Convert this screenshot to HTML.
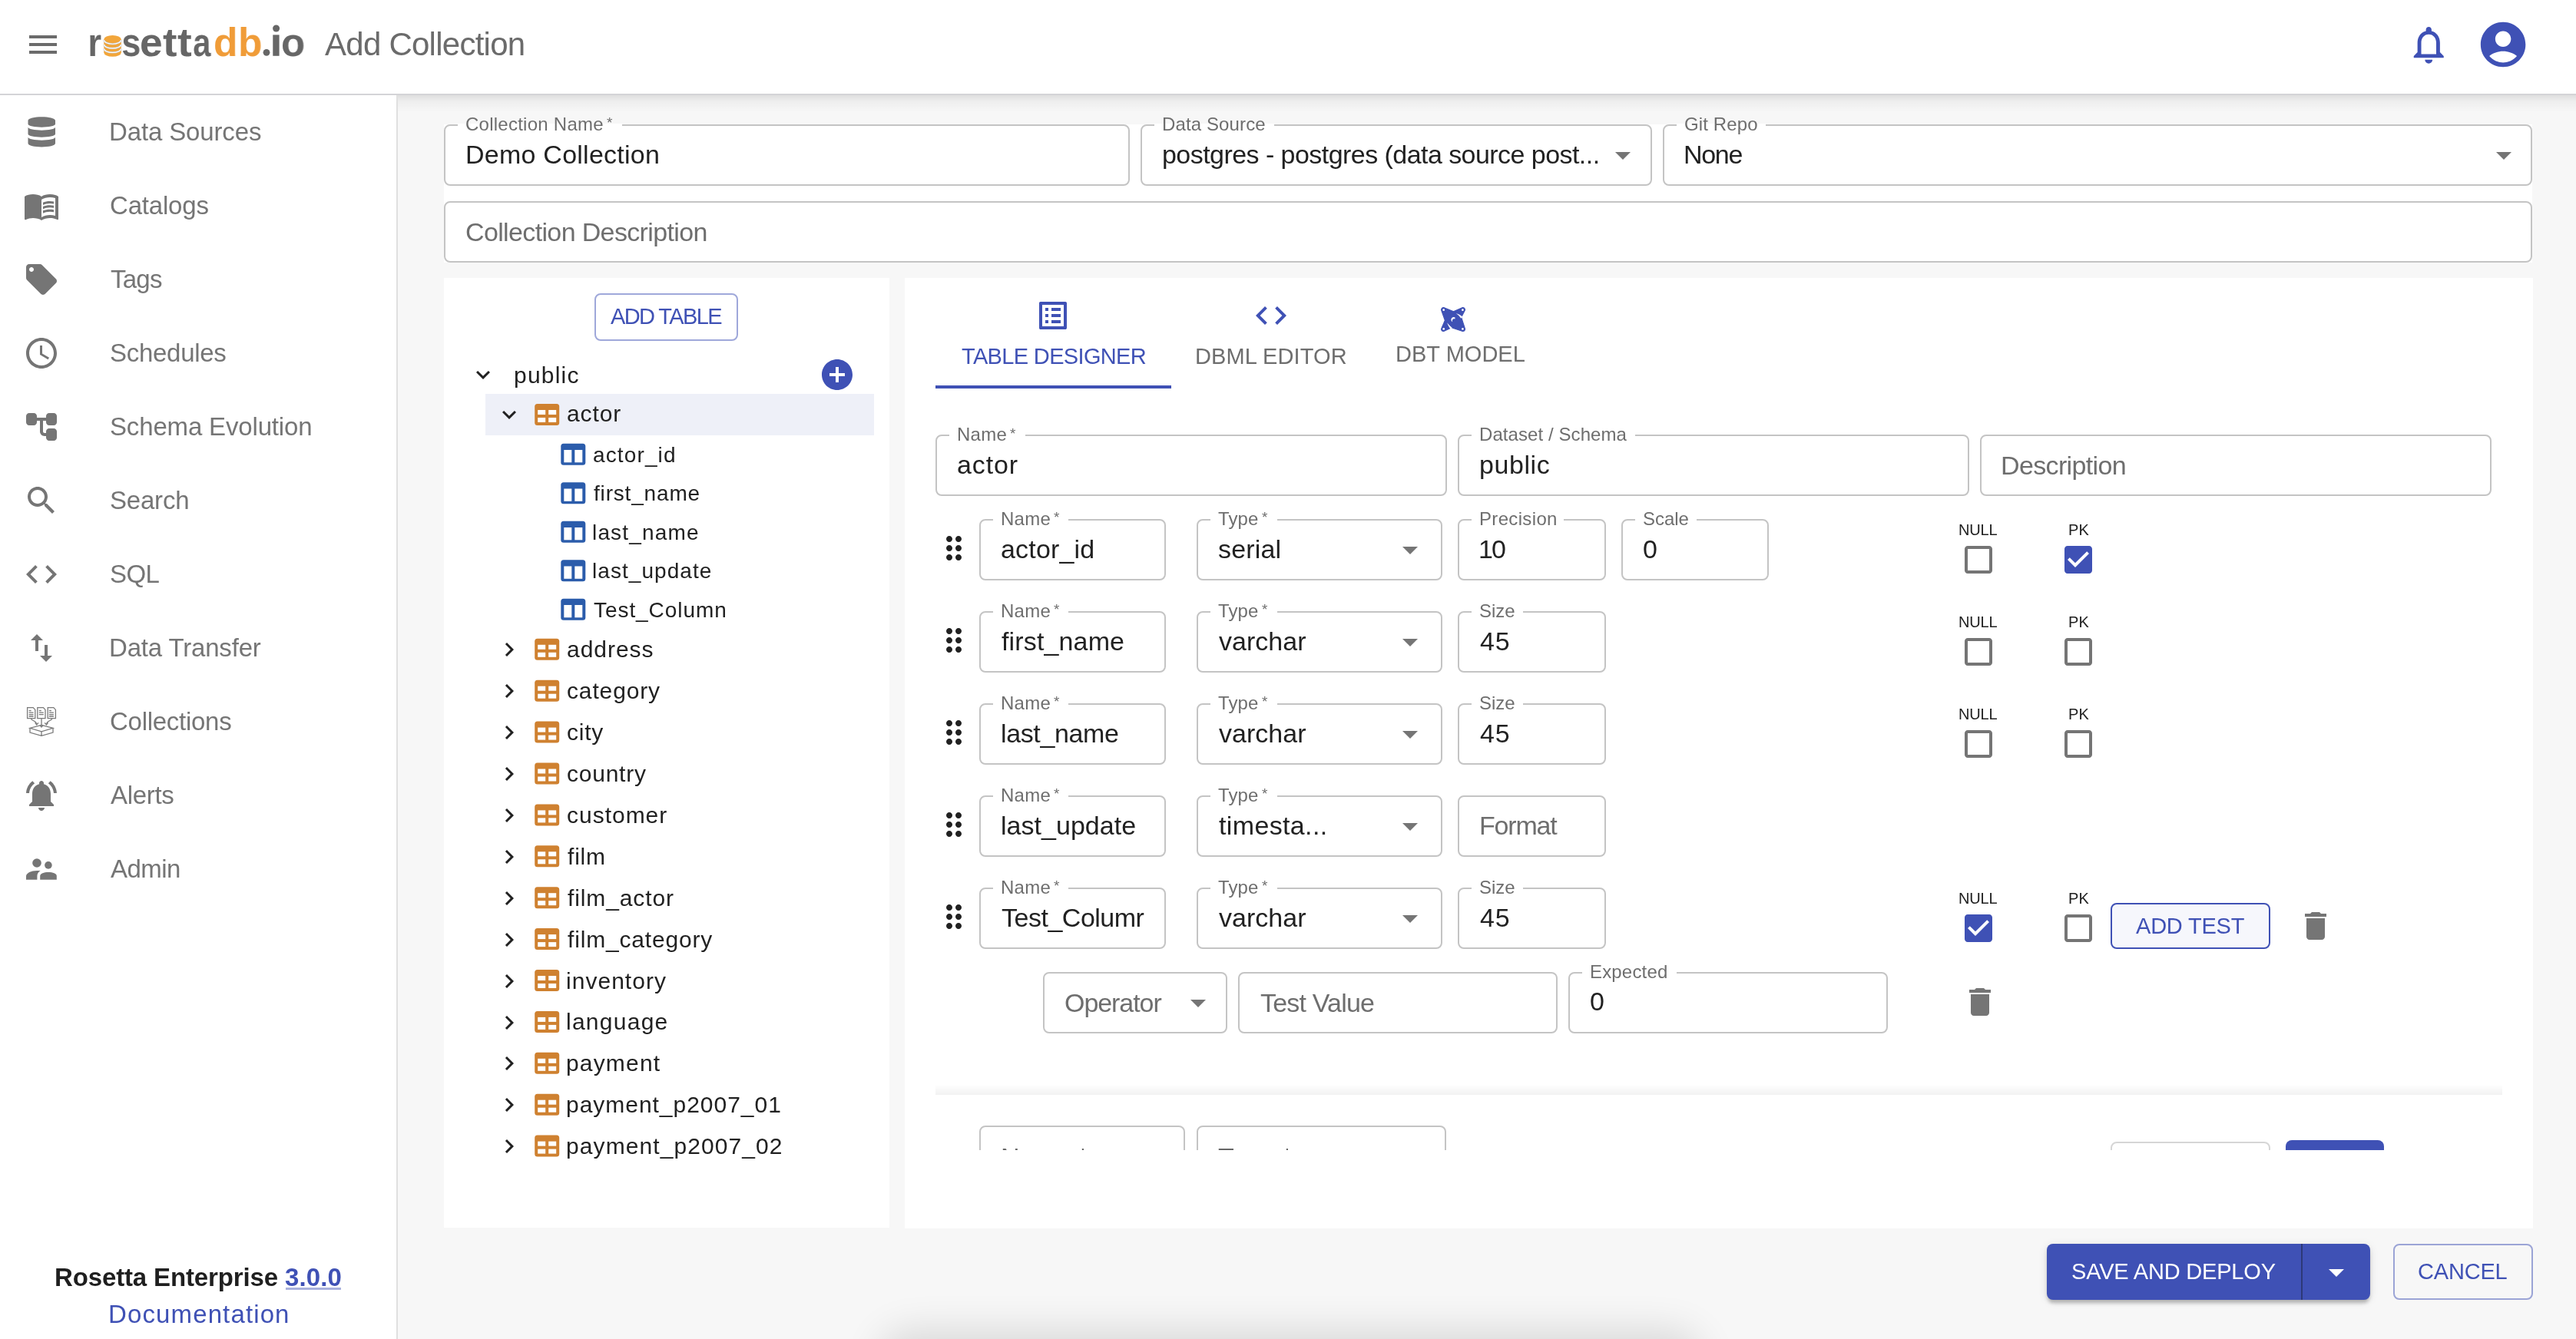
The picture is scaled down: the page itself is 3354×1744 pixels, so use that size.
<!DOCTYPE html>
<html><head><meta charset="utf-8"><style>
html,body{margin:0;padding:0;}
body{width:3354px;height:1744px;position:relative;overflow:hidden;background:#f7f7f7;font-family:"Liberation Sans",sans-serif;}
.t{position:absolute;white-space:nowrap;will-change:transform;font-family:"Liberation Sans",sans-serif;}
</style></head><body>
<div style="position:absolute;left:0.00px;top:0.00px;width:3354.00px;height:122.00px;background:#fff;"></div>
<div style="position:absolute;left:0.00px;top:122.00px;width:3354.00px;height:2.00px;background:#d4d4d7;"></div>
<div style="position:absolute;left:518.00px;top:124.00px;width:2836.00px;height:22.00px;background:linear-gradient(to bottom, rgba(0,0,0,0.10), rgba(0,0,0,0.04) 35%, rgba(0,0,0,0) 100%);"></div>
<div style="position:absolute;left:0.00px;top:124.00px;width:516.00px;height:1620.00px;background:#fff;"></div>
<div style="position:absolute;left:516.00px;top:124.00px;width:2.00px;height:1620.00px;background:#e0e0e0;"></div>
<div style="position:absolute;left:1160.00px;top:1748.00px;width:1040.00px;height:52.00px;border-radius:40px;box-shadow:0 0 50px 16px rgba(0,0,0,0.12);background:#ddd;"></div>
<svg style="position:absolute;left:32.00px;top:34.00px;width:48.00px;height:48.00px" viewBox="0 0 24 24"><path fill="#6b6b6b" d="M3 18h18v-2H3v2zm0-5h18v-2H3v2zm0-7v2h18V6H3z"/></svg>
<svg style="position:absolute;left:3133.40px;top:29.00px;width:58.50px;height:58.50px" viewBox="0 0 24 24"><path fill="#3f51b5" d="M12 22c1.1 0 2-.9 2-2h-4c0 1.1.89 2 2 2zm6-6v-5c0-3.07-1.64-5.64-4.5-6.32V4c0-.83-.67-1.5-1.5-1.5s-1.5.67-1.5 1.5v.68C7.63 5.36 6 7.92 6 11v5l-2 2v1h16v-1l-2-2zm-2 1H8v-6c0-2.48 1.51-4.5 4-4.5s4 2.02 4 4.5v6z"/></svg>
<svg style="position:absolute;left:3224.00px;top:23.00px;width:70.20px;height:70.20px" viewBox="0 0 24 24"><path fill="#3f51b5" d="M12 2C6.48 2 2 6.48 2 12s4.48 10 10 10 10-4.48 10-10S17.52 2 12 2zm0 4c1.93 0 3.5 1.57 3.5 3.5S13.93 13 12 13s-3.5-1.57-3.5-3.5S10.07 6 12 6zm0 14c-2.03 0-4.43-.82-6.14-2.88C7.55 15.8 9.68 15 12 15s4.45.8 6.14 2.12C16.43 19.18 14.03 20 12 20z"/></svg>
<div id="t1" class="t" style="left:114.00px;top:29px;font-size:52px;line-height:52px;color:#666666;letter-spacing:0.000px;font-weight:bold;transform:scaleX(0.8706);transform-origin:3.00px 0;">r</div>
<div id="t2" class="t" style="left:158.00px;top:29px;font-size:52px;line-height:52px;color:#666666;letter-spacing:0.000px;font-weight:bold;transform:scaleX(0.8640);transform-origin:2.00px 0;">s</div>
<div id="t3" class="t" style="left:182.30px;top:29px;font-size:52px;line-height:52px;color:#666666;letter-spacing:0.000px;font-weight:bold;transform:scaleX(1.0240);transform-origin:2.00px 0;">e</div>
<div id="t4" class="t" style="left:211.90px;top:29px;font-size:52px;line-height:52px;color:#666666;letter-spacing:0.000px;font-weight:bold;transform:scaleX(1.0647);transform-origin:0.00px 0;">t</div>
<div id="t5" class="t" style="left:231.40px;top:29px;font-size:52px;line-height:52px;color:#666666;letter-spacing:0.000px;font-weight:bold;transform:scaleX(1.0824);transform-origin:0.00px 0;">t</div>
<div id="t6" class="t" style="left:251.40px;top:29px;font-size:52px;line-height:52px;color:#666666;letter-spacing:0.000px;font-weight:bold;transform:scaleX(0.8034);transform-origin:1.00px 0;">a</div>
<div id="t7" class="t" style="left:278.00px;top:29px;font-size:52px;line-height:52px;color:#f09c38;letter-spacing:0.000px;font-weight:bold;transform:scaleX(0.9926);transform-origin:2.00px 0;">d</div>
<div id="t8" class="t" style="left:310.00px;top:29px;font-size:52px;line-height:52px;color:#f09c38;letter-spacing:0.000px;font-weight:bold;transform:scaleX(0.9889);transform-origin:3.00px 0;">b</div>
<div id="t9" class="t" style="left:365.60px;top:29px;font-size:52px;line-height:52px;color:#666666;letter-spacing:0.000px;font-weight:bold;transform:scaleX(0.9786);transform-origin:2.00px 0;">o</div>
<svg style="position:absolute;left:0.00px;top:0.00px;width:3354.00px;height:124.00px;overflow:visible" viewBox="0 0 3354 124"><rect x="135.3" y="51.5" width="22.5" height="16.9" fill="#f2a63b"/><ellipse cx="146.55" cy="68.4" rx="11.25" ry="5.3" fill="#f2a63b"/><ellipse cx="146.55" cy="51.5" rx="11.25" ry="5.6" fill="#f2a63b"/><path d="M135.5 52.30 a11.05 5.0 0 0 0 22.1 0" fill="none" stroke="#bdbdbd" stroke-width="2.2"/><path d="M135.5 52.30 a11.05 5.0 0 0 0 22.1 0" fill="none" stroke="#fff" stroke-width="1.1"/><path d="M135.5 57.90 a11.05 5.0 0 0 0 22.1 0" fill="none" stroke="#bdbdbd" stroke-width="2.2"/><path d="M135.5 57.90 a11.05 5.0 0 0 0 22.1 0" fill="none" stroke="#fff" stroke-width="1.1"/><path d="M135.5 63.40 a11.05 5.0 0 0 0 22.1 0" fill="none" stroke="#bdbdbd" stroke-width="2.2"/><path d="M135.5 63.40 a11.05 5.0 0 0 0 22.1 0" fill="none" stroke="#fff" stroke-width="1.1"/><circle cx="347" cy="68.3" r="4.4" fill="#666"/><circle cx="359.6" cy="37" r="4.5" fill="#666"/><rect x="355.3" y="45.4" width="8.3" height="27.4" fill="#666"/></svg>
<div id="t10" class="t" style="left:422.70px;top:37px;font-size:42px;line-height:42px;color:#6b6b6b;letter-spacing:-0.746px;">Add Collection</div>
<div id="t11" class="t" style="left:142.00px;top:155px;font-size:33px;line-height:33px;color:#757575;letter-spacing:-0.136px;">Data Sources</div>
<div id="t12" class="t" style="left:143.00px;top:251px;font-size:33px;line-height:33px;color:#757575;letter-spacing:-0.186px;">Catalogs</div>
<div id="t13" class="t" style="left:144.00px;top:347px;font-size:33px;line-height:33px;color:#757575;letter-spacing:-0.767px;">Tags</div>
<div id="t14" class="t" style="left:143.00px;top:443px;font-size:33px;line-height:33px;color:#757575;letter-spacing:-0.288px;">Schedules</div>
<div id="t15" class="t" style="left:143.00px;top:539px;font-size:33px;line-height:33px;color:#757575;letter-spacing:-0.160px;">Schema Evolution</div>
<div id="t16" class="t" style="left:143.00px;top:635px;font-size:33px;line-height:33px;color:#757575;letter-spacing:-0.200px;">Search</div>
<div id="t17" class="t" style="left:143.00px;top:731px;font-size:33px;line-height:33px;color:#757575;letter-spacing:-0.600px;">SQL</div>
<div id="t18" class="t" style="left:142.00px;top:827px;font-size:33px;line-height:33px;color:#757575;letter-spacing:-0.175px;">Data Transfer</div>
<div id="t19" class="t" style="left:143.00px;top:923px;font-size:33px;line-height:33px;color:#757575;letter-spacing:-0.270px;">Collections</div>
<div id="t20" class="t" style="left:144.00px;top:1019px;font-size:33px;line-height:33px;color:#757575;letter-spacing:-0.300px;">Alerts</div>
<div id="t21" class="t" style="left:144.00px;top:1115px;font-size:33px;line-height:33px;color:#757575;letter-spacing:-0.575px;">Admin</div>
<svg style="position:absolute;left:0.00px;top:0.00px;width:100.00px;height:300.00px;overflow:visible" viewBox="0 0 100 300"><path fill="#757575" d="M36.5 157C36.5 150.5 72 150.5 72 157L72 161.5C72 167 36.5 167 36.5 161.5Z M36.5 165.5C36.5 171 72 171 72 165.5L72 174.5C72 180 36.5 180 36.5 174.5Z M36.5 178.5C36.5 184 72 184 72 178.5L72 186.5C72 193 36.5 193 36.5 186.5Z"/></svg>
<svg style="position:absolute;left:30.00px;top:244.00px;width:48.00px;height:48.00px" viewBox="0 0 24 24"><path fill="#757575" d="M21 5c-1.11-.35-2.33-.5-3.5-.5-1.95 0-4.05.4-5.5 1.5-1.45-1.1-3.55-1.5-5.5-1.5S2.45 4.9 1 6v14.65c0 .25.25.5.5.5.1 0 .15-.05.25-.05C3.1 20.45 5.05 20 6.5 20c1.95 0 4.05.4 5.5 1.5 1.35-.85 3.8-1.5 5.5-1.5 1.65 0 3.35.3 4.75 1.05.1.05.15.05.25.05.25 0 .5-.25.5-.5V6c-.6-.45-1.25-.75-2-1zm0 13.5c-1.1-.35-2.3-.5-3.5-.5-1.7 0-4.15.65-5.5 1.5V8c1.35-.85 3.8-1.5 5.5-1.5 1.2 0 2.4.15 3.5.5v11.5zM17.5 10.5c.88 0 1.73.09 2.5.26V9.24c-.79-.15-1.64-.24-2.5-.24-1.7 0-3.24.29-4.5.83v1.66c1.13-.64 2.7-.99 4.5-.99zM13 12.49v1.66c1.13-.64 2.7-.99 4.5-.99.88 0 1.73.09 2.5.26V11.9c-.79-.15-1.64-.24-2.5-.24-1.7 0-3.24.3-4.5.83zm4.5 1.84c-1.7 0-3.24.29-4.5.83v1.66c1.13-.64 2.7-.99 4.5-.99.88 0 1.73.09 2.5.26v-1.52c-.79-.16-1.64-.24-2.5-.24z"/><path fill="#757575" d="M11.6 7.6v12.3c-1.35-.85-4.3-1.6-6-1.6-1.2 0-2.9.15-4 .5V6.6c1.1-.35 2.8-.6 4-.6 1.7 0 4.65.75 6 1.6z"/></svg>
<svg style="position:absolute;left:30.00px;top:340.00px;width:48.00px;height:48.00px" viewBox="0 0 24 24"><path fill="#757575" d="M21.41 11.58l-9-9C12.05 2.22 11.55 2 11 2H4c-1.1 0-2 .9-2 2v7c0 .55.22 1.05.59 1.42l9 9c.36.36.86.58 1.41.58.55 0 1.05-.22 1.41-.59l7-7c.37-.36.59-.86.59-1.41 0-.55-.23-1.06-.59-1.42zM5.5 7C4.67 7 4 6.33 4 5.5S4.67 4 5.5 4 7 4.67 7 5.5 6.33 7 5.5 7z"/></svg>
<svg style="position:absolute;left:30.00px;top:436.00px;width:48.00px;height:48.00px" viewBox="0 0 24 24"><path fill="#757575" d="M11.99 2C6.47 2 2 6.48 2 12s4.47 10 9.99 10C17.52 22 22 17.52 22 12S17.52 2 11.99 2zM12 20c-4.42 0-8-3.58-8-8s3.58-8 8-8 8 3.58 8 8-3.58 8-8 8zM12.5 7H11v6l5.25 3.15.75-1.23-4.5-2.67z"/></svg>
<svg style="position:absolute;left:30.00px;top:532.00px;width:48.00px;height:48.00px" viewBox="0 0 24 24"><path fill="#757575" d="M17 11h3c1.11 0 2-.9 2-2V5c0-1.11-.9-2-2-2h-3c-1.11 0-2 .9-2 2v1H9.01V5c0-1.11-.9-2-2-2H4c-1.1 0-2 .9-2 2v4c0 1.11.9 2 2 2h3c1.11 0 2-.9 2-2V8h2v7.01c0 1.65 1.34 2.99 2.99 2.99H15v1c0 1.11.9 2 2 2h3c1.11 0 2-.9 2-2v-4c0-1.11-.9-2-2-2h-3c-1.11 0-2 .9-2 2v1h-1.01c-.54 0-.99-.45-.99-.99V8h2v1c0 1.1.9 2 2 2z"/></svg>
<svg style="position:absolute;left:30.00px;top:628.00px;width:48.00px;height:48.00px" viewBox="0 0 24 24"><path fill="#757575" d="M15.5 14h-.79l-.28-.27C15.41 12.59 16 11.11 16 9.5 16 5.91 13.09 3 9.5 3S3 5.91 3 9.5 5.91 16 9.5 16c1.61 0 3.09-.59 4.23-1.57l.27.28v.79l5 4.99L20.49 19l-4.99-5zm-6 0C7.01 14 5 11.99 5 9.5S7.01 5 9.5 5 14 7.01 14 9.5 11.99 14 9.5 14z"/></svg>
<svg style="position:absolute;left:30.00px;top:724.00px;width:48.00px;height:48.00px" viewBox="0 0 24 24"><path fill="#757575" d="M9.4 16.6L4.8 12l4.6-4.6L8 6l-6 6 6 6 1.4-1.4zm5.2 0l4.6-4.6-4.6-4.6L16 6l6 6-6 6-1.4-1.4z"/></svg>
<svg style="position:absolute;left:30.00px;top:820.00px;width:48.00px;height:48.00px" viewBox="0 0 24 24"><path fill="#757575" d="M9 3L5 6.99h3V14h2V6.99h3L9 3zm7 14.01V10h-2v7.01h-3L15 21l4-3.99h-3v-.01z"/></svg>
<svg style="position:absolute;left:30.00px;top:1012.00px;width:48.00px;height:48.00px" viewBox="0 0 24 24"><path fill="#757575" d="M7.58 4.08L6.15 2.65C3.75 4.48 2.17 7.3 2.03 10.5h2c.15-2.65 1.51-4.97 3.55-6.42zm12.39 6.42h2c-.15-3.2-1.73-6.02-4.12-7.85l-1.42 1.43c2.02 1.45 3.39 3.77 3.54 6.42zM18 11c0-3.07-1.64-5.64-4.5-6.32V4c0-.83-.67-1.5-1.5-1.5s-1.5.67-1.5 1.5v.68C7.63 5.36 6 7.92 6 11v5l-2 2v1h16v-1l-2-2v-5zm-6 11c.14 0 .27-.01.4-.04.65-.14 1.18-.58 1.44-1.18.1-.24.15-.5.15-.78h-4c.01 1.1.9 2 2.01 2z"/></svg>
<svg style="position:absolute;left:0.00px;top:0.00px;width:100.00px;height:1000.00px;overflow:visible" viewBox="0 0 100 1000"><g fill="none" stroke="#7a7a7a" stroke-width="1.3"><path d="M35.6 921.6h7.6l2.6 2.8v11.2h-10.2z"/><path d="M48.8 921.6h7.6l2.6 2.8v11.2h-10.2z"/><path d="M62.2 921.6h7.6l2.6 2.8v11.2h-10.2z"/><path d="M37.6 925.6h3M37.6 928.2h6M37.6 930.6h6M37.6 933h6M50.8 925.6h3M50.8 928.2h6M50.8 930.6h6M63.9 925.6h3M63.9 928.2h6M63.9 930.6h6M63.9 933h6"/><path d="M40.6 936c0 3 6 2 7 6.8M54 935.8v10.5M67.6 936c0 3-6 2-7 6.8"/><path d="M45.6 941.4l2.2 2.6 2.2-2.6M51.8 944.6l2.2 2.4 2.2-2.4M58.2 941.4l2.2 2.6 2.2-2.6"/><path d="M39 948.3l15-4 15 4-15 4.6z"/><path d="M39 948.3v5.8l15 4.3 15-4.3v-5.8M54 952.9v5.5"/></g></svg>
<svg style="position:absolute;left:0.00px;top:0.00px;width:100.00px;height:1200.00px;overflow:visible" viewBox="0 0 100 1200"><g fill="#757575"><circle cx="48" cy="1124" r="5.8"/><circle cx="62.9" cy="1126.9" r="4.8"/><path d="M34 1145.8v-4.6c0-4.2 6.5-7.3 14.3-7.3h4.4c-2.6 1.5-4.3 4-4.3 7v4.9z"/><path d="M52.2 1145.8v-4.8c0-3.2 5-5 10.8-5s10.8 1.8 10.8 5v4.8z"/></g></svg>
<div id="t22" class="t" style="left:71.40px;top:1647px;font-size:33px;line-height:33px;color:#1f1f1f;letter-spacing:-0.141px;font-weight:bold;">Rosetta Enterprise</div>
<div id="t23" class="t" style="left:371.20px;top:1647px;font-size:33px;line-height:33px;color:#3f51b5;letter-spacing:0.125px;font-weight:bold;">3.0.0</div>
<div style="position:absolute;left:371.50px;top:1677.40px;width:72.30px;height:2.60px;background:#a9b1dc;"></div>
<div id="t24" class="t" style="left:140.50px;top:1695px;font-size:33px;line-height:33px;color:#3f51b5;letter-spacing:1.125px;">Documentation</div>
<div style="position:absolute;left:578.00px;top:162.00px;width:2719.00px;height:180.00px;background:#fff;"></div>
<div style="position:absolute;left:578.00px;top:162.00px;width:893.00px;height:80.00px;box-sizing:border-box;border:2px solid #c4c4c4;border-radius:8px;background:#fff;"></div>
<div style="position:absolute;left:596.00px;top:161.00px;width:214.00px;height:4.00px;background:#fff;"></div>
<div style="position:absolute;left:1485.00px;top:162.00px;width:666.00px;height:80.00px;box-sizing:border-box;border:2px solid #c4c4c4;border-radius:8px;background:#fff;"></div>
<div style="position:absolute;left:1503.00px;top:161.00px;width:156.00px;height:4.00px;background:#fff;"></div>
<div style="position:absolute;left:2165.00px;top:162.00px;width:1132.00px;height:80.00px;box-sizing:border-box;border:2px solid #c4c4c4;border-radius:8px;background:#fff;"></div>
<div style="position:absolute;left:2183.00px;top:161.00px;width:116.00px;height:4.00px;background:#fff;"></div>
<div style="position:absolute;left:578.00px;top:262.00px;width:2719.00px;height:80.00px;box-sizing:border-box;border:2px solid #c4c4c4;border-radius:8px;background:#fff;"></div>
<svg style="position:absolute;left:2089.00px;top:178.00px;width:48.00px;height:48.00px" viewBox="0 0 24 24"><path fill="#757575" d="M7 10l5 5 5-5z"/></svg>
<svg style="position:absolute;left:3236.00px;top:178.00px;width:48.00px;height:48.00px" viewBox="0 0 24 24"><path fill="#757575" d="M7 10l5 5 5-5z"/></svg>
<div id="t25" class="t" style="left:606.08px;top:150px;font-size:24px;line-height:24px;color:#6e6e6e;letter-spacing:0.251px;">Collection Name</div>
<div id="t26" class="t" style="left:789.70px;top:150px;font-size:19px;line-height:19px;color:#6e6e6e;letter-spacing:0.000px;">*</div>
<div id="t27" class="t" style="left:605.80px;top:184px;font-size:34px;line-height:34px;color:#212121;letter-spacing:0.243px;">Demo Collection</div>
<div id="t28" class="t" style="left:1512.80px;top:150px;font-size:24px;line-height:24px;color:#6e6e6e;letter-spacing:0.120px;">Data Source</div>
<div id="t29" class="t" style="left:1513.40px;top:184px;font-size:34px;line-height:34px;color:#212121;letter-spacing:-0.549px;">postgres - postgres (data source post...</div>
<div id="t30" class="t" style="left:2193.08px;top:150px;font-size:24px;line-height:24px;color:#6e6e6e;letter-spacing:0.131px;">Git Repo</div>
<div id="t31" class="t" style="left:2192.40px;top:184px;font-size:34px;line-height:34px;color:#212121;letter-spacing:-1.300px;">None</div>
<div id="t32" class="t" style="left:606.44px;top:285px;font-size:34px;line-height:34px;color:#6e6e6e;letter-spacing:-0.640px;">Collection Description</div>
<div style="position:absolute;left:578.00px;top:362.00px;width:580.00px;height:1237.00px;background:#fff;"></div>
<div style="position:absolute;left:774.00px;top:382.00px;width:187.00px;height:62.00px;box-sizing:border-box;border:2px solid rgba(63,81,181,0.5);border-radius:8px;"></div>
<div style="position:absolute;left:632.00px;top:513.00px;width:506.00px;height:53.70px;background:#eef0f8;"></div>
<svg style="position:absolute;left:611.20px;top:469.90px;width:36.00px;height:36.00px" viewBox="0 0 24 24"><path fill="#212121" d="M16.59 8.59L12 13.17 7.41 8.59 6 10l6 6 6-6z"/></svg>
<svg style="position:absolute;left:644.90px;top:521.80px;width:36.00px;height:36.00px" viewBox="0 0 24 24"><path fill="#212121" d="M16.59 8.59L12 13.17 7.41 8.59 6 10l6 6 6-6z"/></svg>
<svg style="position:absolute;left:1066.00px;top:464.00px;width:48.00px;height:48.00px" viewBox="0 0 24 24"><path fill="#3f51b5" d="M12 2C6.48 2 2 6.48 2 12s4.48 10 10 10 10-4.48 10-10S17.52 2 12 2zm5 11h-4v4h-2v-4H7v-2h4V7h2v4h4v2z"/></svg>
<div id="t33" class="t" style="left:795.00px;top:398px;font-size:29px;line-height:29px;color:#3f51b5;letter-spacing:-1.625px;">ADD TABLE</div>
<div id="t34" class="t" style="left:669.00px;top:474px;font-size:30px;line-height:30px;color:#212121;letter-spacing:1.200px;">public</div>
<div id="t35" class="t" style="left:738.00px;top:524px;font-size:30px;line-height:30px;color:#212121;letter-spacing:0.900px;">actor</div>
<svg style="position:absolute;left:0.00px;top:0.00px;width:3354.00px;height:1744.00px;overflow:visible" viewBox="0 0 3354 1744"><rect x="696.20" y="526.00" width="32" height="28" rx="3.5" fill="#cf8130"/><rect x="700.20" y="534.00" width="10" height="6" fill="#fff"/><rect x="700.20" y="544.00" width="10" height="6" fill="#fff"/><rect x="714.20" y="534.00" width="10" height="6" fill="#fff"/><rect x="714.20" y="544.00" width="10" height="6" fill="#fff"/></svg>
<svg style="position:absolute;left:0.00px;top:0.00px;width:3354.00px;height:1744.00px;overflow:visible" viewBox="0 0 3354 1744"><rect x="730.30" y="577.80" width="32" height="28" rx="3.5" fill="#2b5cab"/><rect x="734.30" y="586.00" width="10" height="16.3" fill="#fff"/><rect x="748.30" y="586.00" width="10" height="16.3" fill="#fff"/></svg>
<div id="t36" class="t" style="left:771.80px;top:579px;font-size:28px;line-height:28px;color:#212121;letter-spacing:1.129px;">actor_id</div>
<svg style="position:absolute;left:0.00px;top:0.00px;width:3354.00px;height:1744.00px;overflow:visible" viewBox="0 0 3354 1744"><rect x="730.30" y="628.30" width="32" height="28" rx="3.5" fill="#2b5cab"/><rect x="734.30" y="636.50" width="10" height="16.3" fill="#fff"/><rect x="748.30" y="636.50" width="10" height="16.3" fill="#fff"/></svg>
<div id="t37" class="t" style="left:772.80px;top:629px;font-size:28px;line-height:28px;color:#212121;letter-spacing:0.822px;">first_name</div>
<svg style="position:absolute;left:0.00px;top:0.00px;width:3354.00px;height:1744.00px;overflow:visible" viewBox="0 0 3354 1744"><rect x="730.30" y="678.80" width="32" height="28" rx="3.5" fill="#2b5cab"/><rect x="734.30" y="687.00" width="10" height="16.3" fill="#fff"/><rect x="748.30" y="687.00" width="10" height="16.3" fill="#fff"/></svg>
<div id="t38" class="t" style="left:770.80px;top:680px;font-size:28px;line-height:28px;color:#212121;letter-spacing:1.163px;">last_name</div>
<svg style="position:absolute;left:0.00px;top:0.00px;width:3354.00px;height:1744.00px;overflow:visible" viewBox="0 0 3354 1744"><rect x="730.30" y="729.30" width="32" height="28" rx="3.5" fill="#2b5cab"/><rect x="734.30" y="737.50" width="10" height="16.3" fill="#fff"/><rect x="748.30" y="737.50" width="10" height="16.3" fill="#fff"/></svg>
<div id="t39" class="t" style="left:770.80px;top:730px;font-size:28px;line-height:28px;color:#212121;letter-spacing:1.060px;">last_update</div>
<svg style="position:absolute;left:0.00px;top:0.00px;width:3354.00px;height:1744.00px;overflow:visible" viewBox="0 0 3354 1744"><rect x="730.30" y="779.80" width="32" height="28" rx="3.5" fill="#2b5cab"/><rect x="734.30" y="788.00" width="10" height="16.3" fill="#fff"/><rect x="748.30" y="788.00" width="10" height="16.3" fill="#fff"/></svg>
<div id="t40" class="t" style="left:772.80px;top:781px;font-size:28px;line-height:28px;color:#212121;letter-spacing:0.940px;">Test_Column</div>
<svg style="position:absolute;left:0.00px;top:0.00px;width:3354.00px;height:1744.00px;overflow:visible" viewBox="0 0 3354 1744"><rect x="696.20" y="831.80" width="32" height="28" rx="3.5" fill="#cf8130"/><rect x="700.20" y="839.80" width="10" height="6" fill="#fff"/><rect x="700.20" y="849.80" width="10" height="6" fill="#fff"/><rect x="714.20" y="839.80" width="10" height="6" fill="#fff"/><rect x="714.20" y="849.80" width="10" height="6" fill="#fff"/></svg>
<svg style="position:absolute;left:644.60px;top:828.40px;width:36.00px;height:36.00px" viewBox="0 0 24 24"><path fill="#212121" d="M10 6L8.59 7.41 13.17 12l-4.58 4.59L10 18l6-6z"/></svg>
<div id="t41" class="t" style="left:738.00px;top:831px;font-size:30px;line-height:30px;color:#212121;letter-spacing:0.967px;">address</div>
<svg style="position:absolute;left:0.00px;top:0.00px;width:3354.00px;height:1744.00px;overflow:visible" viewBox="0 0 3354 1744"><rect x="696.20" y="885.70" width="32" height="28" rx="3.5" fill="#cf8130"/><rect x="700.20" y="893.70" width="10" height="6" fill="#fff"/><rect x="700.20" y="903.70" width="10" height="6" fill="#fff"/><rect x="714.20" y="893.70" width="10" height="6" fill="#fff"/><rect x="714.20" y="903.70" width="10" height="6" fill="#fff"/></svg>
<svg style="position:absolute;left:644.60px;top:882.30px;width:36.00px;height:36.00px" viewBox="0 0 24 24"><path fill="#212121" d="M10 6L8.59 7.41 13.17 12l-4.58 4.59L10 18l6-6z"/></svg>
<div id="t42" class="t" style="left:738.00px;top:885px;font-size:30px;line-height:30px;color:#212121;letter-spacing:0.857px;">category</div>
<svg style="position:absolute;left:0.00px;top:0.00px;width:3354.00px;height:1744.00px;overflow:visible" viewBox="0 0 3354 1744"><rect x="696.20" y="939.60" width="32" height="28" rx="3.5" fill="#cf8130"/><rect x="700.20" y="947.60" width="10" height="6" fill="#fff"/><rect x="700.20" y="957.60" width="10" height="6" fill="#fff"/><rect x="714.20" y="947.60" width="10" height="6" fill="#fff"/><rect x="714.20" y="957.60" width="10" height="6" fill="#fff"/></svg>
<svg style="position:absolute;left:644.60px;top:936.20px;width:36.00px;height:36.00px" viewBox="0 0 24 24"><path fill="#212121" d="M10 6L8.59 7.41 13.17 12l-4.58 4.59L10 18l6-6z"/></svg>
<div id="t43" class="t" style="left:738.00px;top:939px;font-size:30px;line-height:30px;color:#212121;letter-spacing:0.733px;">city</div>
<svg style="position:absolute;left:0.00px;top:0.00px;width:3354.00px;height:1744.00px;overflow:visible" viewBox="0 0 3354 1744"><rect x="696.20" y="993.50" width="32" height="28" rx="3.5" fill="#cf8130"/><rect x="700.20" y="1001.50" width="10" height="6" fill="#fff"/><rect x="700.20" y="1011.50" width="10" height="6" fill="#fff"/><rect x="714.20" y="1001.50" width="10" height="6" fill="#fff"/><rect x="714.20" y="1011.50" width="10" height="6" fill="#fff"/></svg>
<svg style="position:absolute;left:644.60px;top:990.10px;width:36.00px;height:36.00px" viewBox="0 0 24 24"><path fill="#212121" d="M10 6L8.59 7.41 13.17 12l-4.58 4.59L10 18l6-6z"/></svg>
<div id="t44" class="t" style="left:738.00px;top:993px;font-size:30px;line-height:30px;color:#212121;letter-spacing:0.767px;">country</div>
<svg style="position:absolute;left:0.00px;top:0.00px;width:3354.00px;height:1744.00px;overflow:visible" viewBox="0 0 3354 1744"><rect x="696.20" y="1047.40" width="32" height="28" rx="3.5" fill="#cf8130"/><rect x="700.20" y="1055.40" width="10" height="6" fill="#fff"/><rect x="700.20" y="1065.40" width="10" height="6" fill="#fff"/><rect x="714.20" y="1055.40" width="10" height="6" fill="#fff"/><rect x="714.20" y="1065.40" width="10" height="6" fill="#fff"/></svg>
<svg style="position:absolute;left:644.60px;top:1044.00px;width:36.00px;height:36.00px" viewBox="0 0 24 24"><path fill="#212121" d="M10 6L8.59 7.41 13.17 12l-4.58 4.59L10 18l6-6z"/></svg>
<div id="t45" class="t" style="left:738.00px;top:1047px;font-size:30px;line-height:30px;color:#212121;letter-spacing:0.986px;">customer</div>
<svg style="position:absolute;left:0.00px;top:0.00px;width:3354.00px;height:1744.00px;overflow:visible" viewBox="0 0 3354 1744"><rect x="696.20" y="1101.30" width="32" height="28" rx="3.5" fill="#cf8130"/><rect x="700.20" y="1109.30" width="10" height="6" fill="#fff"/><rect x="700.20" y="1119.30" width="10" height="6" fill="#fff"/><rect x="714.20" y="1109.30" width="10" height="6" fill="#fff"/><rect x="714.20" y="1119.30" width="10" height="6" fill="#fff"/></svg>
<svg style="position:absolute;left:644.60px;top:1097.90px;width:36.00px;height:36.00px" viewBox="0 0 24 24"><path fill="#212121" d="M10 6L8.59 7.41 13.17 12l-4.58 4.59L10 18l6-6z"/></svg>
<div id="t46" class="t" style="left:739.00px;top:1101px;font-size:30px;line-height:30px;color:#212121;letter-spacing:0.800px;">film</div>
<svg style="position:absolute;left:0.00px;top:0.00px;width:3354.00px;height:1744.00px;overflow:visible" viewBox="0 0 3354 1744"><rect x="696.20" y="1155.20" width="32" height="28" rx="3.5" fill="#cf8130"/><rect x="700.20" y="1163.20" width="10" height="6" fill="#fff"/><rect x="700.20" y="1173.20" width="10" height="6" fill="#fff"/><rect x="714.20" y="1163.20" width="10" height="6" fill="#fff"/><rect x="714.20" y="1173.20" width="10" height="6" fill="#fff"/></svg>
<svg style="position:absolute;left:644.60px;top:1151.80px;width:36.00px;height:36.00px" viewBox="0 0 24 24"><path fill="#212121" d="M10 6L8.59 7.41 13.17 12l-4.58 4.59L10 18l6-6z"/></svg>
<div id="t47" class="t" style="left:739.00px;top:1155px;font-size:30px;line-height:30px;color:#212121;letter-spacing:0.878px;">film_actor</div>
<svg style="position:absolute;left:0.00px;top:0.00px;width:3354.00px;height:1744.00px;overflow:visible" viewBox="0 0 3354 1744"><rect x="696.20" y="1209.10" width="32" height="28" rx="3.5" fill="#cf8130"/><rect x="700.20" y="1217.10" width="10" height="6" fill="#fff"/><rect x="700.20" y="1227.10" width="10" height="6" fill="#fff"/><rect x="714.20" y="1217.10" width="10" height="6" fill="#fff"/><rect x="714.20" y="1227.10" width="10" height="6" fill="#fff"/></svg>
<svg style="position:absolute;left:644.60px;top:1205.70px;width:36.00px;height:36.00px" viewBox="0 0 24 24"><path fill="#212121" d="M10 6L8.59 7.41 13.17 12l-4.58 4.59L10 18l6-6z"/></svg>
<div id="t48" class="t" style="left:739.00px;top:1209px;font-size:30px;line-height:30px;color:#212121;letter-spacing:0.825px;">film_category</div>
<svg style="position:absolute;left:0.00px;top:0.00px;width:3354.00px;height:1744.00px;overflow:visible" viewBox="0 0 3354 1744"><rect x="696.20" y="1263.00" width="32" height="28" rx="3.5" fill="#cf8130"/><rect x="700.20" y="1271.00" width="10" height="6" fill="#fff"/><rect x="700.20" y="1281.00" width="10" height="6" fill="#fff"/><rect x="714.20" y="1271.00" width="10" height="6" fill="#fff"/><rect x="714.20" y="1281.00" width="10" height="6" fill="#fff"/></svg>
<svg style="position:absolute;left:644.60px;top:1259.60px;width:36.00px;height:36.00px" viewBox="0 0 24 24"><path fill="#212121" d="M10 6L8.59 7.41 13.17 12l-4.58 4.59L10 18l6-6z"/></svg>
<div id="t49" class="t" style="left:737.00px;top:1263px;font-size:30px;line-height:30px;color:#212121;letter-spacing:1.025px;">inventory</div>
<svg style="position:absolute;left:0.00px;top:0.00px;width:3354.00px;height:1744.00px;overflow:visible" viewBox="0 0 3354 1744"><rect x="696.20" y="1316.90" width="32" height="28" rx="3.5" fill="#cf8130"/><rect x="700.20" y="1324.90" width="10" height="6" fill="#fff"/><rect x="700.20" y="1334.90" width="10" height="6" fill="#fff"/><rect x="714.20" y="1324.90" width="10" height="6" fill="#fff"/><rect x="714.20" y="1334.90" width="10" height="6" fill="#fff"/></svg>
<svg style="position:absolute;left:644.60px;top:1313.50px;width:36.00px;height:36.00px" viewBox="0 0 24 24"><path fill="#212121" d="M10 6L8.59 7.41 13.17 12l-4.58 4.59L10 18l6-6z"/></svg>
<div id="t50" class="t" style="left:737.00px;top:1316px;font-size:30px;line-height:30px;color:#212121;letter-spacing:1.257px;">language</div>
<svg style="position:absolute;left:0.00px;top:0.00px;width:3354.00px;height:1744.00px;overflow:visible" viewBox="0 0 3354 1744"><rect x="696.20" y="1370.80" width="32" height="28" rx="3.5" fill="#cf8130"/><rect x="700.20" y="1378.80" width="10" height="6" fill="#fff"/><rect x="700.20" y="1388.80" width="10" height="6" fill="#fff"/><rect x="714.20" y="1378.80" width="10" height="6" fill="#fff"/><rect x="714.20" y="1388.80" width="10" height="6" fill="#fff"/></svg>
<svg style="position:absolute;left:644.60px;top:1367.40px;width:36.00px;height:36.00px" viewBox="0 0 24 24"><path fill="#212121" d="M10 6L8.59 7.41 13.17 12l-4.58 4.59L10 18l6-6z"/></svg>
<div id="t51" class="t" style="left:737.00px;top:1370px;font-size:30px;line-height:30px;color:#212121;letter-spacing:1.167px;">payment</div>
<svg style="position:absolute;left:0.00px;top:0.00px;width:3354.00px;height:1744.00px;overflow:visible" viewBox="0 0 3354 1744"><rect x="696.20" y="1424.70" width="32" height="28" rx="3.5" fill="#cf8130"/><rect x="700.20" y="1432.70" width="10" height="6" fill="#fff"/><rect x="700.20" y="1442.70" width="10" height="6" fill="#fff"/><rect x="714.20" y="1432.70" width="10" height="6" fill="#fff"/><rect x="714.20" y="1442.70" width="10" height="6" fill="#fff"/></svg>
<svg style="position:absolute;left:644.60px;top:1421.30px;width:36.00px;height:36.00px" viewBox="0 0 24 24"><path fill="#212121" d="M10 6L8.59 7.41 13.17 12l-4.58 4.59L10 18l6-6z"/></svg>
<div id="t52" class="t" style="left:737.00px;top:1424px;font-size:30px;line-height:30px;color:#212121;letter-spacing:0.973px;">payment_p2007_01</div>
<svg style="position:absolute;left:0.00px;top:0.00px;width:3354.00px;height:1744.00px;overflow:visible" viewBox="0 0 3354 1744"><rect x="696.20" y="1478.60" width="32" height="28" rx="3.5" fill="#cf8130"/><rect x="700.20" y="1486.60" width="10" height="6" fill="#fff"/><rect x="700.20" y="1496.60" width="10" height="6" fill="#fff"/><rect x="714.20" y="1486.60" width="10" height="6" fill="#fff"/><rect x="714.20" y="1496.60" width="10" height="6" fill="#fff"/></svg>
<svg style="position:absolute;left:644.60px;top:1475.20px;width:36.00px;height:36.00px" viewBox="0 0 24 24"><path fill="#212121" d="M10 6L8.59 7.41 13.17 12l-4.58 4.59L10 18l6-6z"/></svg>
<div id="t53" class="t" style="left:737.00px;top:1478px;font-size:30px;line-height:30px;color:#212121;letter-spacing:1.087px;">payment_p2007_02</div>
<div style="position:absolute;left:1178.00px;top:362.00px;width:2120.00px;height:1237.50px;background:#fff;"></div>
<div style="position:absolute;left:1218.00px;top:501.80px;width:306.70px;height:3.90px;background:#3f51b5;"></div>
<svg style="position:absolute;left:1347.20px;top:387.20px;width:48.00px;height:48.00px" viewBox="0 0 24 24"><path fill="#3f51b5" d="M19 5v14H5V5h14m1.1-2H3.9c-.5 0-.9.4-.9.9v16.2c0 .4.4.9.9.9h16.2c.4 0 .9-.5.9-.9V3.9c0-.5-.5-.9-.9-.9zM11 7h6v2h-6V7zm0 4h6v2h-6v-2zm0 4h6v2h-6zM7 7h2v2H7zm0 4h2v2H7zm0 4h2v2H7z"/></svg>
<svg style="position:absolute;left:1630.60px;top:387.00px;width:48.00px;height:48.00px" viewBox="0 0 24 24"><path fill="#3f51b5" d="M9.4 16.6L4.8 12l4.6-4.6L8 6l-6 6 6 6 1.4-1.4zm5.2 0l4.6-4.6-4.6-4.6L16 6l6 6-6 6-1.4-1.4z"/></svg>
<svg style="position:absolute;left:0.00px;top:0.00px;width:3354.00px;height:1744.00px;overflow:visible" viewBox="0 0 3354 1744"><path fill="#3f51b5" stroke="#3f51b5" stroke-width="1.2" stroke-linejoin="round" d="M1879.7 400.6L1892.5 405.8L1904.4 400.6A3.3 3.3 0 0 1 1907.5 403.7L1902.6 413.2L1907.5 428.4A3.3 3.3 0 0 1 1904.4 431.5L1890 426.6L1879.7 431.5A3.3 3.3 0 0 1 1876.6 428.4L1881.4 417.2L1876.6 403.7A3.3 3.3 0 0 1 1879.7 400.6Z"/><circle cx="1879.7" cy="403.7" r="1.35" fill="#fff"/><circle cx="1904.4" cy="403.7" r="1.35" fill="#fff"/><circle cx="1879.7" cy="428.4" r="1.35" fill="#fff"/><circle cx="1904.4" cy="428.4" r="1.35" fill="#fff"/><path fill="#fff" d="M1895.8 408Q1900.5 409.5 1904 412.2L1902.4 414.8Q1900 411 1895.8 408Z M1884.1 420.3Q1885.6 424.8 1888.2 428.2L1891 427.3Q1887.5 424.5 1884.1 420.3Z"/><path fill="#fff" d="M1894.6 413.6c-2.2-1.6-5.2 0-5.2 2.6 0 1.5.8 2.5 1.8 3-.6-1.2-.4-2.8.9-3.6.8-.5 1.6-.4 2.2.1z"/></svg>
<div id="t54" class="t" style="left:1251.50px;top:450px;font-size:29px;line-height:29px;color:#3f51b5;letter-spacing:-0.654px;">TABLE DESIGNER</div>
<div id="t55" class="t" style="left:1556.00px;top:450px;font-size:29px;line-height:29px;color:#6e6e6e;letter-spacing:0.100px;">DBML EDITOR</div>
<div id="t56" class="t" style="left:1816.80px;top:447px;font-size:29px;line-height:29px;color:#6e6e6e;letter-spacing:0.025px;">DBT MODEL</div>
<div style="position:absolute;left:1218.00px;top:566.00px;width:666.00px;height:80.00px;box-sizing:border-box;border:2px solid #c4c4c4;border-radius:8px;background:#fff;"></div>
<div style="position:absolute;left:1236.00px;top:565.00px;width:99.00px;height:4.00px;background:#fff;"></div>
<div style="position:absolute;left:1898.00px;top:566.00px;width:666.00px;height:80.00px;box-sizing:border-box;border:2px solid #c4c4c4;border-radius:8px;background:#fff;"></div>
<div style="position:absolute;left:1916.00px;top:565.00px;width:213.00px;height:4.00px;background:#fff;"></div>
<div style="position:absolute;left:2578.00px;top:566.00px;width:666.00px;height:80.00px;box-sizing:border-box;border:2px solid #c4c4c4;border-radius:8px;background:#fff;"></div>
<div id="t57" class="t" style="left:1245.75px;top:554px;font-size:24px;line-height:24px;color:#6e6e6e;letter-spacing:0.250px;">Name</div>
<div id="t58" class="t" style="left:1315.30px;top:555px;font-size:19px;line-height:19px;color:#6e6e6e;letter-spacing:0.000px;">*</div>
<div id="t59" class="t" style="left:1246.44px;top:588px;font-size:34px;line-height:34px;color:#212121;letter-spacing:0.890px;">actor</div>
<div id="t60" class="t" style="left:1925.80px;top:554px;font-size:24px;line-height:24px;color:#6e6e6e;letter-spacing:0.080px;">Dataset / Schema</div>
<div id="t61" class="t" style="left:1926.20px;top:588px;font-size:34px;line-height:34px;color:#212121;letter-spacing:0.560px;">public</div>
<div id="t62" class="t" style="left:2605.40px;top:589px;font-size:34px;line-height:34px;color:#6e6e6e;letter-spacing:-0.640px;">Description</div>
<svg style="position:absolute;left:1218.00px;top:689.90px;width:48.00px;height:48.00px" viewBox="0 0 24 24"><path fill="#212121" d="M11 18c0 1.1-.9 2-2 2s-2-.9-2-2 .9-2 2-2 2 .9 2 2zm-2-8c-1.1 0-2 .9-2 2s.9 2 2 2 2-.9 2-2-.9-2-2-2zm0-6c-1.1 0-2 .9-2 2s.9 2 2 2 2-.9 2-2-.9-2-2-2zm6 4c1.1 0 2-.9 2-2s-.9-2-2-2-2 .9-2 2 .9 2 2 2zm0 2c-1.1 0-2 .9-2 2s.9 2 2 2 2-.9 2-2-.9-2-2-2zm0 6c-1.1 0-2 .9-2 2s.9 2 2 2 2-.9 2-2-.9-2-2-2z"/></svg>
<div style="position:absolute;left:1275.00px;top:676.00px;width:243.00px;height:80.00px;box-sizing:border-box;border:2px solid #c4c4c4;border-radius:8px;background:#fff;"></div>
<div style="position:absolute;left:1293.00px;top:675.00px;width:98.30px;height:4.00px;background:#fff;"></div>
<div style="position:absolute;left:1558.00px;top:676.00px;width:320.00px;height:80.00px;box-sizing:border-box;border:2px solid #c4c4c4;border-radius:8px;background:#fff;"></div>
<div style="position:absolute;left:1576.00px;top:675.00px;width:87.00px;height:4.00px;background:#fff;"></div>
<svg style="position:absolute;left:1812.20px;top:691.70px;width:48.00px;height:48.00px" viewBox="0 0 24 24"><path fill="#757575" d="M7 10l5 5 5-5z"/></svg>
<div style="position:absolute;left:1898.00px;top:676.00px;width:193.00px;height:80.00px;box-sizing:border-box;border:2px solid #c4c4c4;border-radius:8px;background:#fff;"></div>
<div style="position:absolute;left:1916.00px;top:675.00px;width:120.00px;height:4.00px;background:#fff;"></div>
<div style="position:absolute;left:2111.00px;top:676.00px;width:192.00px;height:80.00px;box-sizing:border-box;border:2px solid #c4c4c4;border-radius:8px;background:#fff;"></div>
<div style="position:absolute;left:2129.00px;top:675.00px;width:80.00px;height:4.00px;background:#fff;"></div>
<div id="t63" class="t" style="left:1302.75px;top:664px;font-size:24px;line-height:24px;color:#6e6e6e;letter-spacing:0.250px;">Name</div>
<div id="t64" class="t" style="left:1372.30px;top:664px;font-size:19px;line-height:19px;color:#6e6e6e;letter-spacing:0.000px;">*</div>
<div id="t65" class="t" style="left:1303.44px;top:698px;font-size:34px;line-height:34px;color:#212121;letter-spacing:0.180px;">actor_id</div>
<div id="t66" class="t" style="left:1586.40px;top:664px;font-size:24px;line-height:24px;color:#6e6e6e;letter-spacing:0.067px;">Type</div>
<div id="t67" class="t" style="left:1643.30px;top:664px;font-size:19px;line-height:19px;color:#6e6e6e;letter-spacing:0.000px;">*</div>
<div id="t68" class="t" style="left:1586.44px;top:698px;font-size:34px;line-height:34px;color:#212121;letter-spacing:0.172px;">serial</div>
<div id="t69" class="t" style="left:1925.80px;top:664px;font-size:24px;line-height:24px;color:#6e6e6e;letter-spacing:0.338px;">Precision</div>
<div id="t70" class="t" style="left:1924.80px;top:698px;font-size:34px;line-height:34px;color:#212121;letter-spacing:-1.800px;">10</div>
<div id="t71" class="t" style="left:2139.08px;top:664px;font-size:24px;line-height:24px;color:#6e6e6e;letter-spacing:-0.020px;">Scale</div>
<div id="t72" class="t" style="left:2139.44px;top:698px;font-size:34px;line-height:34px;color:#212121;letter-spacing:0.000px;">0</div>
<div id="t73" class="t" style="left:2550.30px;top:680px;font-size:20px;line-height:20px;color:#212121;letter-spacing:-0.133px;">NULL</div>
<div id="t74" class="t" style="left:2692.50px;top:680px;font-size:20px;line-height:20px;color:#212121;letter-spacing:0.200px;">PK</div>
<svg style="position:absolute;left:2552.00px;top:705.00px;width:48.00px;height:48.00px" viewBox="0 0 24 24"><path fill="#757575" d="M19 5v14H5V5h14m0-2H5c-1.1 0-2 .9-2 2v14c0 1.1.9 2 2 2h14c1.1 0 2-.9 2-2V5c0-1.1-.9-2-2-2z"/></svg>
<svg style="position:absolute;left:2682.00px;top:705.00px;width:48.00px;height:48.00px" viewBox="0 0 24 24"><path fill="#3f51b5" d="M19 3H5c-1.11 0-2 .9-2 2v14c0 1.1.89 2 2 2h14c1.11 0 2-.9 2-2V5c0-1.1-.89-2-2-2zm-9 14l-5-5 1.41-1.41L10 14.17l7.59-7.59L19 8l-9 9z"/></svg>
<svg style="position:absolute;left:1218.00px;top:809.90px;width:48.00px;height:48.00px" viewBox="0 0 24 24"><path fill="#212121" d="M11 18c0 1.1-.9 2-2 2s-2-.9-2-2 .9-2 2-2 2 .9 2 2zm-2-8c-1.1 0-2 .9-2 2s.9 2 2 2 2-.9 2-2-.9-2-2-2zm0-6c-1.1 0-2 .9-2 2s.9 2 2 2 2-.9 2-2-.9-2-2-2zm6 4c1.1 0 2-.9 2-2s-.9-2-2-2-2 .9-2 2 .9 2 2 2zm0 2c-1.1 0-2 .9-2 2s.9 2 2 2 2-.9 2-2-.9-2-2-2zm0 6c-1.1 0-2 .9-2 2s.9 2 2 2 2-.9 2-2-.9-2-2-2z"/></svg>
<div style="position:absolute;left:1275.00px;top:796.00px;width:243.00px;height:80.00px;box-sizing:border-box;border:2px solid #c4c4c4;border-radius:8px;background:#fff;"></div>
<div style="position:absolute;left:1293.00px;top:795.00px;width:98.30px;height:4.00px;background:#fff;"></div>
<div style="position:absolute;left:1558.00px;top:796.00px;width:320.00px;height:80.00px;box-sizing:border-box;border:2px solid #c4c4c4;border-radius:8px;background:#fff;"></div>
<div style="position:absolute;left:1576.00px;top:795.00px;width:87.00px;height:4.00px;background:#fff;"></div>
<svg style="position:absolute;left:1812.20px;top:811.70px;width:48.00px;height:48.00px" viewBox="0 0 24 24"><path fill="#757575" d="M7 10l5 5 5-5z"/></svg>
<div style="position:absolute;left:1898.00px;top:796.00px;width:193.00px;height:80.00px;box-sizing:border-box;border:2px solid #c4c4c4;border-radius:8px;background:#fff;"></div>
<div style="position:absolute;left:1916.00px;top:795.00px;width:67.00px;height:4.00px;background:#fff;"></div>
<div id="t75" class="t" style="left:1302.75px;top:784px;font-size:24px;line-height:24px;color:#6e6e6e;letter-spacing:0.250px;">Name</div>
<div id="t76" class="t" style="left:1372.30px;top:784px;font-size:19px;line-height:19px;color:#6e6e6e;letter-spacing:0.000px;">*</div>
<div id="t77" class="t" style="left:1303.80px;top:818px;font-size:34px;line-height:34px;color:#212121;letter-spacing:0.144px;">first_name</div>
<div id="t78" class="t" style="left:1586.40px;top:784px;font-size:24px;line-height:24px;color:#6e6e6e;letter-spacing:0.067px;">Type</div>
<div id="t79" class="t" style="left:1643.30px;top:784px;font-size:19px;line-height:19px;color:#6e6e6e;letter-spacing:0.000px;">*</div>
<div id="t80" class="t" style="left:1586.80px;top:818px;font-size:34px;line-height:34px;color:#212121;letter-spacing:0.017px;">varchar</div>
<div id="t81" class="t" style="left:1926.08px;top:784px;font-size:24px;line-height:24px;color:#6e6e6e;letter-spacing:-0.027px;">Size</div>
<div id="t82" class="t" style="left:1926.80px;top:818px;font-size:34px;line-height:34px;color:#212121;letter-spacing:0.900px;">45</div>
<div id="t83" class="t" style="left:2550.30px;top:800px;font-size:20px;line-height:20px;color:#212121;letter-spacing:-0.133px;">NULL</div>
<div id="t84" class="t" style="left:2692.50px;top:800px;font-size:20px;line-height:20px;color:#212121;letter-spacing:0.200px;">PK</div>
<svg style="position:absolute;left:2552.00px;top:825.00px;width:48.00px;height:48.00px" viewBox="0 0 24 24"><path fill="#757575" d="M19 5v14H5V5h14m0-2H5c-1.1 0-2 .9-2 2v14c0 1.1.9 2 2 2h14c1.1 0 2-.9 2-2V5c0-1.1-.9-2-2-2z"/></svg>
<svg style="position:absolute;left:2682.00px;top:825.00px;width:48.00px;height:48.00px" viewBox="0 0 24 24"><path fill="#757575" d="M19 5v14H5V5h14m0-2H5c-1.1 0-2 .9-2 2v14c0 1.1.9 2 2 2h14c1.1 0 2-.9 2-2V5c0-1.1-.9-2-2-2z"/></svg>
<svg style="position:absolute;left:1218.00px;top:929.90px;width:48.00px;height:48.00px" viewBox="0 0 24 24"><path fill="#212121" d="M11 18c0 1.1-.9 2-2 2s-2-.9-2-2 .9-2 2-2 2 .9 2 2zm-2-8c-1.1 0-2 .9-2 2s.9 2 2 2 2-.9 2-2-.9-2-2-2zm0-6c-1.1 0-2 .9-2 2s.9 2 2 2 2-.9 2-2-.9-2-2-2zm6 4c1.1 0 2-.9 2-2s-.9-2-2-2-2 .9-2 2 .9 2 2 2zm0 2c-1.1 0-2 .9-2 2s.9 2 2 2 2-.9 2-2-.9-2-2-2zm0 6c-1.1 0-2 .9-2 2s.9 2 2 2 2-.9 2-2-.9-2-2-2z"/></svg>
<div style="position:absolute;left:1275.00px;top:916.00px;width:243.00px;height:80.00px;box-sizing:border-box;border:2px solid #c4c4c4;border-radius:8px;background:#fff;"></div>
<div style="position:absolute;left:1293.00px;top:915.00px;width:98.30px;height:4.00px;background:#fff;"></div>
<div style="position:absolute;left:1558.00px;top:916.00px;width:320.00px;height:80.00px;box-sizing:border-box;border:2px solid #c4c4c4;border-radius:8px;background:#fff;"></div>
<div style="position:absolute;left:1576.00px;top:915.00px;width:87.00px;height:4.00px;background:#fff;"></div>
<svg style="position:absolute;left:1812.20px;top:931.70px;width:48.00px;height:48.00px" viewBox="0 0 24 24"><path fill="#757575" d="M7 10l5 5 5-5z"/></svg>
<div style="position:absolute;left:1898.00px;top:916.00px;width:193.00px;height:80.00px;box-sizing:border-box;border:2px solid #c4c4c4;border-radius:8px;background:#fff;"></div>
<div style="position:absolute;left:1916.00px;top:915.00px;width:67.00px;height:4.00px;background:#fff;"></div>
<div id="t85" class="t" style="left:1302.75px;top:904px;font-size:24px;line-height:24px;color:#6e6e6e;letter-spacing:0.250px;">Name</div>
<div id="t86" class="t" style="left:1372.30px;top:904px;font-size:19px;line-height:19px;color:#6e6e6e;letter-spacing:0.000px;">*</div>
<div id="t87" class="t" style="left:1303.40px;top:938px;font-size:34px;line-height:34px;color:#212121;letter-spacing:-0.363px;">last_name</div>
<div id="t88" class="t" style="left:1586.40px;top:904px;font-size:24px;line-height:24px;color:#6e6e6e;letter-spacing:0.067px;">Type</div>
<div id="t89" class="t" style="left:1643.30px;top:904px;font-size:19px;line-height:19px;color:#6e6e6e;letter-spacing:0.000px;">*</div>
<div id="t90" class="t" style="left:1586.80px;top:938px;font-size:34px;line-height:34px;color:#212121;letter-spacing:0.017px;">varchar</div>
<div id="t91" class="t" style="left:1926.08px;top:904px;font-size:24px;line-height:24px;color:#6e6e6e;letter-spacing:-0.027px;">Size</div>
<div id="t92" class="t" style="left:1926.80px;top:938px;font-size:34px;line-height:34px;color:#212121;letter-spacing:0.900px;">45</div>
<div id="t93" class="t" style="left:2550.30px;top:920px;font-size:20px;line-height:20px;color:#212121;letter-spacing:-0.133px;">NULL</div>
<div id="t94" class="t" style="left:2692.50px;top:920px;font-size:20px;line-height:20px;color:#212121;letter-spacing:0.200px;">PK</div>
<svg style="position:absolute;left:2552.00px;top:945.00px;width:48.00px;height:48.00px" viewBox="0 0 24 24"><path fill="#757575" d="M19 5v14H5V5h14m0-2H5c-1.1 0-2 .9-2 2v14c0 1.1.9 2 2 2h14c1.1 0 2-.9 2-2V5c0-1.1-.9-2-2-2z"/></svg>
<svg style="position:absolute;left:2682.00px;top:945.00px;width:48.00px;height:48.00px" viewBox="0 0 24 24"><path fill="#757575" d="M19 5v14H5V5h14m0-2H5c-1.1 0-2 .9-2 2v14c0 1.1.9 2 2 2h14c1.1 0 2-.9 2-2V5c0-1.1-.9-2-2-2z"/></svg>
<svg style="position:absolute;left:1218.00px;top:1049.90px;width:48.00px;height:48.00px" viewBox="0 0 24 24"><path fill="#212121" d="M11 18c0 1.1-.9 2-2 2s-2-.9-2-2 .9-2 2-2 2 .9 2 2zm-2-8c-1.1 0-2 .9-2 2s.9 2 2 2 2-.9 2-2-.9-2-2-2zm0-6c-1.1 0-2 .9-2 2s.9 2 2 2 2-.9 2-2-.9-2-2-2zm6 4c1.1 0 2-.9 2-2s-.9-2-2-2-2 .9-2 2 .9 2 2 2zm0 2c-1.1 0-2 .9-2 2s.9 2 2 2 2-.9 2-2-.9-2-2-2zm0 6c-1.1 0-2 .9-2 2s.9 2 2 2 2-.9 2-2-.9-2-2-2z"/></svg>
<div style="position:absolute;left:1275.00px;top:1036.00px;width:243.00px;height:80.00px;box-sizing:border-box;border:2px solid #c4c4c4;border-radius:8px;background:#fff;"></div>
<div style="position:absolute;left:1293.00px;top:1035.00px;width:98.30px;height:4.00px;background:#fff;"></div>
<div style="position:absolute;left:1558.00px;top:1036.00px;width:320.00px;height:80.00px;box-sizing:border-box;border:2px solid #c4c4c4;border-radius:8px;background:#fff;"></div>
<div style="position:absolute;left:1576.00px;top:1035.00px;width:87.00px;height:4.00px;background:#fff;"></div>
<svg style="position:absolute;left:1812.20px;top:1051.70px;width:48.00px;height:48.00px" viewBox="0 0 24 24"><path fill="#757575" d="M7 10l5 5 5-5z"/></svg>
<div style="position:absolute;left:1898.00px;top:1036.00px;width:193.00px;height:80.00px;box-sizing:border-box;border:2px solid #c4c4c4;border-radius:8px;background:#fff;"></div>
<div id="t95" class="t" style="left:1302.75px;top:1024px;font-size:24px;line-height:24px;color:#6e6e6e;letter-spacing:0.250px;">Name</div>
<div id="t96" class="t" style="left:1372.30px;top:1024px;font-size:19px;line-height:19px;color:#6e6e6e;letter-spacing:0.000px;">*</div>
<div id="t97" class="t" style="left:1303.40px;top:1058px;font-size:34px;line-height:34px;color:#212121;letter-spacing:0.030px;">last_update</div>
<div id="t98" class="t" style="left:1586.40px;top:1024px;font-size:24px;line-height:24px;color:#6e6e6e;letter-spacing:0.067px;">Type</div>
<div id="t99" class="t" style="left:1643.30px;top:1024px;font-size:19px;line-height:19px;color:#6e6e6e;letter-spacing:0.000px;">*</div>
<div id="t100" class="t" style="left:1586.80px;top:1058px;font-size:34px;line-height:34px;color:#212121;letter-spacing:0.356px;">timesta...</div>
<div id="t101" class="t" style="left:1925.90px;top:1058px;font-size:34px;line-height:34px;color:#6e6e6e;letter-spacing:-1.200px;">Format</div>
<svg style="position:absolute;left:1218.00px;top:1169.90px;width:48.00px;height:48.00px" viewBox="0 0 24 24"><path fill="#212121" d="M11 18c0 1.1-.9 2-2 2s-2-.9-2-2 .9-2 2-2 2 .9 2 2zm-2-8c-1.1 0-2 .9-2 2s.9 2 2 2 2-.9 2-2-.9-2-2-2zm0-6c-1.1 0-2 .9-2 2s.9 2 2 2 2-.9 2-2-.9-2-2-2zm6 4c1.1 0 2-.9 2-2s-.9-2-2-2-2 .9-2 2 .9 2 2 2zm0 2c-1.1 0-2 .9-2 2s.9 2 2 2 2-.9 2-2-.9-2-2-2zm0 6c-1.1 0-2 .9-2 2s.9 2 2 2 2-.9 2-2-.9-2-2-2z"/></svg>
<div style="position:absolute;left:1275.00px;top:1156.00px;width:243.00px;height:80.00px;box-sizing:border-box;border:2px solid #c4c4c4;border-radius:8px;background:#fff;"></div>
<div style="position:absolute;left:1293.00px;top:1155.00px;width:98.30px;height:4.00px;background:#fff;"></div>
<div style="position:absolute;left:1558.00px;top:1156.00px;width:320.00px;height:80.00px;box-sizing:border-box;border:2px solid #c4c4c4;border-radius:8px;background:#fff;"></div>
<div style="position:absolute;left:1576.00px;top:1155.00px;width:87.00px;height:4.00px;background:#fff;"></div>
<svg style="position:absolute;left:1812.20px;top:1171.70px;width:48.00px;height:48.00px" viewBox="0 0 24 24"><path fill="#757575" d="M7 10l5 5 5-5z"/></svg>
<div style="position:absolute;left:1898.00px;top:1156.00px;width:193.00px;height:80.00px;box-sizing:border-box;border:2px solid #c4c4c4;border-radius:8px;background:#fff;"></div>
<div style="position:absolute;left:1916.00px;top:1155.00px;width:67.00px;height:4.00px;background:#fff;"></div>
<div id="t102" class="t" style="left:1302.75px;top:1144px;font-size:24px;line-height:24px;color:#6e6e6e;letter-spacing:0.250px;">Name</div>
<div id="t103" class="t" style="left:1372.30px;top:1144px;font-size:19px;line-height:19px;color:#6e6e6e;letter-spacing:0.000px;">*</div>
<div style="position:absolute;left:1277.6px;top:1158px;width:213px;height:60px;overflow:hidden">
<div id="t104" class="t" style="left:26.80px;top:20px;font-size:34px;line-height:34px;color:#212121;letter-spacing:-0.490px;">Test_Columr</div>
</div>
<div id="t105" class="t" style="left:1586.40px;top:1144px;font-size:24px;line-height:24px;color:#6e6e6e;letter-spacing:0.067px;">Type</div>
<div id="t106" class="t" style="left:1643.30px;top:1144px;font-size:19px;line-height:19px;color:#6e6e6e;letter-spacing:0.000px;">*</div>
<div id="t107" class="t" style="left:1586.80px;top:1178px;font-size:34px;line-height:34px;color:#212121;letter-spacing:0.017px;">varchar</div>
<div id="t108" class="t" style="left:1926.08px;top:1144px;font-size:24px;line-height:24px;color:#6e6e6e;letter-spacing:-0.027px;">Size</div>
<div id="t109" class="t" style="left:1926.80px;top:1178px;font-size:34px;line-height:34px;color:#212121;letter-spacing:0.900px;">45</div>
<div id="t110" class="t" style="left:2550.30px;top:1160px;font-size:20px;line-height:20px;color:#212121;letter-spacing:-0.133px;">NULL</div>
<div id="t111" class="t" style="left:2692.50px;top:1160px;font-size:20px;line-height:20px;color:#212121;letter-spacing:0.200px;">PK</div>
<svg style="position:absolute;left:2552.00px;top:1185.00px;width:48.00px;height:48.00px" viewBox="0 0 24 24"><path fill="#3f51b5" d="M19 3H5c-1.11 0-2 .9-2 2v14c0 1.1.89 2 2 2h14c1.11 0 2-.9 2-2V5c0-1.1-.89-2-2-2zm-9 14l-5-5 1.41-1.41L10 14.17l7.59-7.59L19 8l-9 9z"/></svg>
<svg style="position:absolute;left:2682.00px;top:1185.00px;width:48.00px;height:48.00px" viewBox="0 0 24 24"><path fill="#757575" d="M19 5v14H5V5h14m0-2H5c-1.1 0-2 .9-2 2v14c0 1.1.9 2 2 2h14c1.1 0 2-.9 2-2V5c0-1.1-.9-2-2-2z"/></svg>
<div style="position:absolute;left:2748.00px;top:1176.00px;width:208.00px;height:60.00px;box-sizing:border-box;border:2.5px solid #3f51b5;border-radius:8px;background:#f6f7fc;"></div>
<svg style="position:absolute;left:2991.00px;top:1182.00px;width:48.00px;height:48.00px" viewBox="0 0 24 24"><path fill="#757575" d="M6 19c0 1.1.9 2 2 2h8c1.1 0 2-.9 2-2V7H6v12zM19 4h-3.5l-1-1h-5l-1 1H5v2h14V4z"/></svg>
<div id="t112" class="t" style="left:2780.90px;top:1192px;font-size:29px;line-height:29px;color:#3f51b5;letter-spacing:-0.214px;">ADD TEST</div>
<div style="position:absolute;left:1358.00px;top:1266.00px;width:240.00px;height:80.00px;box-sizing:border-box;border:2px solid #c4c4c4;border-radius:8px;background:#fff;"></div>
<svg style="position:absolute;left:1535.80px;top:1281.50px;width:48.00px;height:48.00px" viewBox="0 0 24 24"><path fill="#757575" d="M7 10l5 5 5-5z"/></svg>
<div style="position:absolute;left:1612.00px;top:1266.00px;width:416.00px;height:80.00px;box-sizing:border-box;border:2px solid #c4c4c4;border-radius:8px;background:#fff;"></div>
<div style="position:absolute;left:2042.00px;top:1266.00px;width:416.00px;height:80.00px;box-sizing:border-box;border:2px solid #c4c4c4;border-radius:8px;background:#fff;"></div>
<div style="position:absolute;left:2060.00px;top:1265.00px;width:123.00px;height:4.00px;background:#fff;"></div>
<svg style="position:absolute;left:2554.00px;top:1281.00px;width:48.00px;height:48.00px" viewBox="0 0 24 24"><path fill="#757575" d="M6 19c0 1.1.9 2 2 2h8c1.1 0 2-.9 2-2V7H6v12zM19 4h-3.5l-1-1h-5l-1 1H5v2h14V4z"/></svg>
<div id="t113" class="t" style="left:1386.44px;top:1289px;font-size:34px;line-height:34px;color:#6e6e6e;letter-spacing:-1.063px;">Operator</div>
<div id="t114" class="t" style="left:1640.80px;top:1289px;font-size:34px;line-height:34px;color:#6e6e6e;letter-spacing:-0.811px;">Test Value</div>
<div id="t115" class="t" style="left:2069.80px;top:1254px;font-size:24px;line-height:24px;color:#6e6e6e;letter-spacing:0.171px;">Expected</div>
<div id="t116" class="t" style="left:2070.44px;top:1287px;font-size:34px;line-height:34px;color:#212121;letter-spacing:0.000px;">0</div>
<div style="position:absolute;left:1218.00px;top:1413.00px;width:2040.00px;height:12.60px;background:linear-gradient(to bottom, rgba(0,0,0,0), rgba(0,0,0,0.055));"></div>
<div style="position:absolute;left:1178px;top:1430px;width:2120px;height:68px;overflow:hidden">
<div style="position:absolute;left:97.00px;top:36.00px;width:268.00px;height:80.00px;box-sizing:border-box;border:2px solid #c4c4c4;border-radius:8px;"></div>
<div style="position:absolute;left:380.00px;top:36.00px;width:325.00px;height:80.00px;box-sizing:border-box;border:2px solid #c4c4c4;border-radius:8px;"></div>
<div style="position:absolute;left:1570.00px;top:56.60px;width:208.00px;height:59.40px;box-sizing:border-box;border:2px solid #d6d6d6;border-radius:8px;"></div>
<div style="position:absolute;left:1797.60px;top:55.00px;width:128.20px;height:61.00px;border-radius:8px;background:#3f51b5;"></div>
<div style="position:absolute;left:125px;top:59.5px;font:34px/34px 'Liberation Sans';color:#666">Name *</div>
<div style="position:absolute;left:408px;top:59.5px;font:34px/34px 'Liberation Sans';color:#666">Type *</div>
</div>
<div style="position:absolute;left:2665.00px;top:1620.00px;width:421.00px;height:73.00px;border-radius:8px;background:#3f51b5;box-shadow:0 6px 4px -2px rgba(0,0,0,0.16),0 4px 6px 0 rgba(0,0,0,0.11),0 2px 12px 0 rgba(0,0,0,0.10);"></div>
<div style="position:absolute;left:2996.00px;top:1620.00px;width:2.00px;height:73.00px;background:#2c3978;"></div>
<svg style="position:absolute;left:3018.40px;top:1632.60px;width:48.00px;height:48.00px" viewBox="0 0 24 24"><path fill="#fff" d="M7 10l5 5 5-5z"/></svg>
<div style="position:absolute;left:3116.00px;top:1620.00px;width:182.00px;height:73.00px;box-sizing:border-box;border:2px solid rgba(63,81,181,0.5);border-radius:8px;"></div>
<div id="t117" class="t" style="left:2697.00px;top:1642px;font-size:29px;line-height:29px;color:#fff;letter-spacing:-0.186px;">SAVE AND DEPLOY</div>
<div id="t118" class="t" style="left:3147.80px;top:1642px;font-size:29px;line-height:29px;color:#3f51b5;letter-spacing:-0.180px;">CANCEL</div>
</body></html>
